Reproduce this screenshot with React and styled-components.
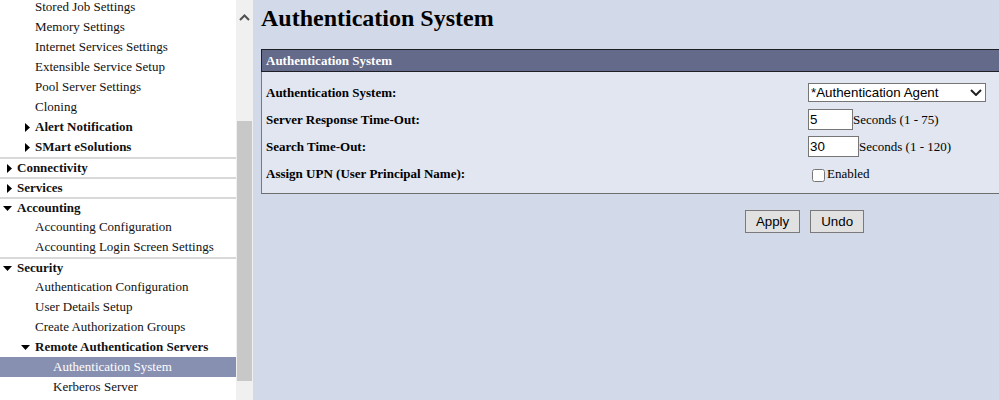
import React from "react";
import styled, { createGlobalStyle } from "styled-components";

const Global = createGlobalStyle`
  html, body { margin: 0; padding: 0; }
  body { font-family: "Liberation Serif", "Times New Roman", serif; color: #000; }
`;

const Page = styled.div`
  display: flex;
  height: 400px;
  width: 999px;
  overflow: hidden;
`;

const Nav = styled.nav`
  width: 236px;
  flex-shrink: 0;
  background: #fff;
  overflow: hidden;
`;

const NavList = styled.ul`
  list-style: none;
  margin: -3px 0 0;
  padding: 0;
`;

const NavRow = styled.li`
  display: flex;
  align-items: center;
  height: 20px;
  box-sizing: border-box;
  padding-left: ${(p) => (p.$level - 1) * 18}px;
  border-top: ${(p) => (p.$level === 1 ? "2px solid #d9d9d9" : "none")};
  background: ${(p) => (p.$active ? "#8890b2" : "transparent")};
  color: ${(p) => (p.$active ? "#fff" : "#111")};
  font-size: 13px;
  font-weight: ${(p) => (p.$bold ? "bold" : "normal")};
  white-space: nowrap;
`;

const ArrowSlot = styled.span`
  width: 17px;
  flex-shrink: 0;
  display: flex;
  justify-content: flex-end;
  align-items: center;
  padding-right: 5px;
  box-sizing: border-box;
`;

const ScrollBar = styled.div`
  width: 17px;
  flex-shrink: 0;
  background: #f0f0f0;
  display: flex;
  flex-direction: column;
`;

const ScrollArrow = styled.div`
  height: 35px;
  display: flex;
  align-items: center;
  justify-content: center;
`;

const Thumb = styled.div`
  margin: 86px 1px 0;
  height: 260px;
  background: #c8c8c8;
`;

const Main = styled.main`
  flex: 1;
  background: #d2d9e8;
  overflow: hidden;
  padding-left: 8px;
`;

const Content = styled.div`
  width: 1087px;
`;

const Title = styled.h1`
  margin: 5px 0 0;
  font-size: 24px;
  line-height: 27px;
  font-weight: bold;
`;

const Panel = styled.section`
  margin-top: 17px;
`;

const PanelHeader = styled.div`
  height: 23px;
  box-sizing: border-box;
  line-height: 21px;
  background: #636a8a;
  border: 1px solid #1e1e24;
  border-right: none;
  color: #fff;
  font-weight: bold;
  font-size: 13px;
  padding-left: 4px;
`;

const PanelBody = styled.div`
  background: #e1e6f1;
  border-left: 1px solid #7a7a7a;
  border-bottom: 1px solid #6e6e6e;
  padding: 7px 0 6px 4px;
  display: grid;
  grid-template-columns: 542px 1fr;
  grid-auto-rows: 27px;
  align-items: center;
`;

const Label = styled.div`
  font-weight: bold;
  font-size: 13px;
`;

const Control = styled.div`
  display: flex;
  align-items: center;
  font-size: 13px;
`;

const SelectWrap = styled.div`
  position: relative;
  display: inline-block;
`;

const Select = styled.select`
  appearance: none;
  -webkit-appearance: none;
  width: 178px;
  height: 19px;
  box-sizing: border-box;
  border: 1px solid #767676;
  border-radius: 0;
  background: #fff;
  font-family: "Liberation Sans", Arial, sans-serif;
  font-size: 13.333px;
  padding: 0 0 0 2px;
  color: #000;
  outline: none;
`;

const Chevron = styled.svg`
  position: absolute;
  right: 4px;
  top: 6px;
  pointer-events: none;
`;

const NumberInput = styled.input`
  width: ${(p) => p.$w}px;
  height: 21px;
  box-sizing: border-box;
  border: 1px solid #767676;
  border-radius: 0;
  background: #fff;
  font-family: "Liberation Sans", Arial, sans-serif;
  font-size: 13.333px;
  padding: 0 0 0 1px;
  margin: 0;
  outline: none;
`;

const Check = styled.input`
  width: 13px;
  height: 13px;
  margin: 3px 2px 0 4px;
`;

const ButtonRow = styled.div`
  display: flex;
  justify-content: center;
  gap: 10px;
  margin-top: 16px;
`;

const Button = styled.button`
  height: 23px;
  padding: 0 10px;
  border: 1px solid #7a7a7a;
  border-radius: 0;
  background: #e1e1e1;
  font-family: "Liberation Sans", Arial, sans-serif;
  font-size: 13.333px;
  color: #000;
`;

const RightTri = () => (
  <svg width="5" height="9" viewBox="0 0 5 9">
    <polygon points="0,0 5,4.5 0,9" fill="#000" />
  </svg>
);

const DownTri = () => (
  <svg width="9" height="5" viewBox="0 0 9 5">
    <polygon points="0,0 9,0 4.5,5" fill="#000" />
  </svg>
);

const items = [
  { t: "Stored Job Settings", l: 2 },
  { t: "Memory Settings", l: 2 },
  { t: "Internet Services Settings", l: 2 },
  { t: "Extensible Service Setup", l: 2 },
  { t: "Pool Server Settings", l: 2 },
  { t: "Cloning", l: 2 },
  { t: "Alert Notification", l: 2, a: "r" },
  { t: "SMart eSolutions", l: 2, a: "r" },
  { t: "Connectivity", l: 1, a: "r" },
  { t: "Services", l: 1, a: "r" },
  { t: "Accounting", l: 1, a: "d" },
  { t: "Accounting Configuration", l: 2 },
  { t: "Accounting Login Screen Settings", l: 2 },
  { t: "Security", l: 1, a: "d" },
  { t: "Authentication Configuration", l: 2 },
  { t: "User Details Setup", l: 2 },
  { t: "Create Authorization Groups", l: 2 },
  { t: "Remote Authentication Servers", l: 2, a: "d" },
  { t: "Authentication System", l: 3, active: true },
  { t: "Kerberos Server", l: 3 },
];

export default function App() {
  return (
    <>
      <Global />
      <Page>
        <Nav>
          <NavList>
            {items.map((it) => (
              <NavRow key={it.t} $level={it.l} $bold={!!it.a} $active={it.active}>
                <ArrowSlot>
                  {it.a === "r" && <RightTri />}
                  {it.a === "d" && <DownTri />}
                </ArrowSlot>
                {it.t}
              </NavRow>
            ))}
          </NavList>
        </Nav>
        <ScrollBar>
          <ScrollArrow>
            <svg width="11" height="7" viewBox="0 0 11 7">
              <polyline points="1,6 5.5,1.5 10,6" fill="none" stroke="#505050" strokeWidth="2" />
            </svg>
          </ScrollArrow>
          <Thumb />
        </ScrollBar>
        <Main>
          <Content>
            <Title>Authentication System</Title>
            <Panel>
              <PanelHeader>Authentication System</PanelHeader>
              <PanelBody>
                <Label>Authentication System:</Label>
                <Control>
                  <SelectWrap>
                    <Select defaultValue="agent">
                      <option value="agent">*Authentication Agent</option>
                    </Select>
                    <Chevron width="12" height="7" viewBox="0 0 12 7">
                      <polyline points="1,1 6,6 11,1" fill="none" stroke="#222" strokeWidth="2" />
                    </Chevron>
                  </SelectWrap>
                </Control>
                <Label>Server Response Time-Out:</Label>
                <Control>
                  <NumberInput $w={45} defaultValue="5" />
                  Seconds (1 - 75)
                </Control>
                <Label>Search Time-Out:</Label>
                <Control>
                  <NumberInput $w={51} defaultValue="30" />
                  Seconds (1 - 120)
                </Control>
                <Label>Assign UPN (User Principal Name):</Label>
                <Control>
                  <Check type="checkbox" />
                  Enabled
                </Control>
              </PanelBody>
            </Panel>
            <ButtonRow>
              <Button>Apply</Button>
              <Button>Undo</Button>
            </ButtonRow>
          </Content>
        </Main>
      </Page>
    </>
  );
}
